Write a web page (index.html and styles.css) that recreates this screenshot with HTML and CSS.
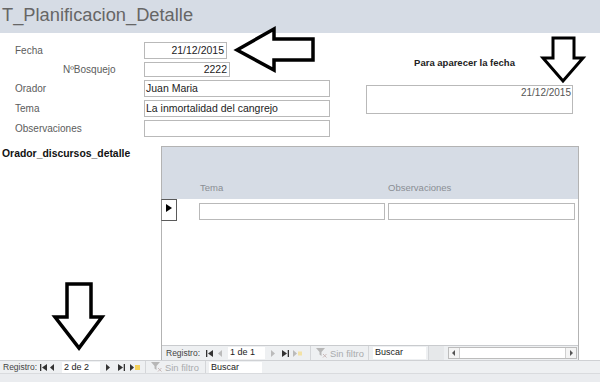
FILE: index.html
```html
<!DOCTYPE html>
<html lang="es">
<head>
    <meta charset="UTF-8">
    <title>T_Planificacion_Detalle</title>
    <link rel="stylesheet" href="styles.css">
</head>
<body>
    <div class="form">
        <!-- Form header -->
        <header class="title-bar">
            <h1 class="title">T_Planificacion_Detalle</h1>
        </header>

        <!-- Detail section -->
        <main class="detail">
            <section class="top">
                <div class="fields">
                    <span class="lbl">Fecha</span>
                    <div class="box box-date num">21/12/2015</div>
                    <span class="lbl lbl-indent">NºBosquejo</span>
                    <div class="box box-num num">2222</div>
                    <span class="lbl">Orador</span>
                    <div class="box box-wide">Juan Maria</div>
                    <span class="lbl">Tema</span>
                    <div class="box box-wide">La inmortalidad del cangrejo</div>
                    <span class="lbl">Observaciones</span>
                    <div class="box box-wide"></div>
                </div>

                <div class="date-panel">
                    <div class="panel-title">Para aparecer la fecha</div>
                    <div class="panel-box">21/12/2015</div>
                </div>
            </section>

            <section class="sub">
                <div class="sub-name">Orador_discursos_detalle</div>

                <div class="subform">
                    <div class="sub-head">
                        <span class="col col-tema">Tema</span>
                        <span class="col col-obs">Observaciones</span>
                    </div>
                    <div class="sub-row">
                        <div class="selector">
                            <svg width="6" height="8" viewBox="0 0 6 8"><polygon points="0 0 6 4 0 8" fill="#000"/></svg>
                        </div>
                        <div class="cell cell-tema"></div>
                        <div class="cell cell-obs"></div>
                    </div>
                    <div class="sub-fill"></div>

                    <!-- Subform navigation -->
                    <div class="navbar sub-nav">
                        <span class="nav-label">Registro:</span>
                        <span class="nav-btn sn-first"><svg width="7" height="7" viewBox="0 0 7 7"><rect x="0" y="0" width="1.3" height="7" fill="#333"/><polygon points="7 0 2 3.5 7 7" fill="#333"/></svg></span>
                        <span class="nav-btn sn-prev"><svg width="4" height="7" viewBox="0 0 4 7"><polygon points="4 0 0 3.5 4 7" fill="#bbb"/></svg></span>
                        <span class="nav-input sn-input">1 de 1</span>
                        <span class="nav-btn sn-next"><svg width="4" height="7" viewBox="0 0 4 7"><polygon points="0 0 4 3.5 0 7" fill="#bbb"/></svg></span>
                        <span class="nav-btn sn-last"><svg width="7" height="7" viewBox="0 0 7 7"><polygon points="0 0 5 3.5 0 7" fill="#333"/><rect x="5.7" y="0" width="1.3" height="7" fill="#333"/></svg></span>
                        <span class="nav-btn sn-new"><svg width="9" height="7" viewBox="0 0 9 7"><polygon points="0 0 4 3.5 0 7" fill="#bbb"/><rect x="5" y="1.5" width="4" height="4" fill="#f3e2a6"/></svg></span>
                        <span class="sep"></span>
                        <span class="filter">
                            <svg width="11" height="10" viewBox="0 0 11 10"><polygon points="0 0 9 0 5.5 4 5.5 8 3.5 6.5 3.5 4" fill="#b7b7b7"/><path d="M7 6 L10.5 9.5 M10.5 6 L7 9.5" stroke="#c9b9b9" stroke-width="1"/></svg>
                            Sin filtro
                        </span>
                        <span class="sep"></span>
                        <span class="nav-input search sn-search">Buscar</span>
                        <span class="nav-gap"></span>
                        <div class="scrollbar">
                            <span class="sb-btn"><svg width="3" height="6" viewBox="0 0 3 6"><polygon points="3 0 0 3 3 6" fill="#555"/></svg></span>
                            <span class="sb-track"></span>
                            <span class="sb-btn"><svg width="3" height="6" viewBox="0 0 3 6"><polygon points="0 0 3 3 0 6" fill="#555"/></svg></span>
                        </div>
                    </div>
                </div>
            </section>
        </main>

        <!-- Main form navigation -->
        <footer class="navbar main-nav">
            <span class="nav-label">Registro:</span>
            <span class="nav-btn mn-first"><svg width="7" height="7" viewBox="0 0 7 7"><rect x="0" y="0" width="1.3" height="7" fill="#333"/><polygon points="7 0 2 3.5 7 7" fill="#333"/></svg></span>
            <span class="nav-btn mn-prev"><svg width="4" height="7" viewBox="0 0 4 7"><polygon points="4 0 0 3.5 4 7" fill="#333"/></svg></span>
            <span class="nav-input mn-input">2 de 2</span>
            <span class="nav-btn mn-next"><svg width="4" height="7" viewBox="0 0 4 7"><polygon points="0 0 4 3.5 0 7" fill="#333"/></svg></span>
            <span class="nav-btn mn-last"><svg width="7" height="7" viewBox="0 0 7 7"><polygon points="0 0 5 3.5 0 7" fill="#333"/><rect x="5.7" y="0" width="1.3" height="7" fill="#333"/></svg></span>
            <span class="nav-btn mn-new"><svg width="10" height="7" viewBox="0 0 10 7"><polygon points="0 0 4 3.5 0 7" fill="#333"/><rect x="5" y="1" width="5" height="5" fill="#f2d05a"/></svg></span>
            <span class="sep"></span>
            <span class="filter">
                <svg width="11" height="10" viewBox="0 0 11 10"><polygon points="0 0 9 0 5.5 4 5.5 8 3.5 6.5 3.5 4" fill="#b7b7b7"/><path d="M7 6 L10.5 9.5 M10.5 6 L7 9.5" stroke="#c9b9b9" stroke-width="1"/></svg>
                Sin filtro
            </span>
            <span class="sep"></span>
            <span class="nav-input search mn-search">Buscar</span>
        </footer>
        <div class="status"></div>

        <!-- Hand-drawn annotation arrows -->
        <svg class="arrows" width="600" height="382" viewBox="0 0 600 382">
            <polygon points="237 50 274 29 274 39 313 39 313 60 274 60 274 70" fill="#fff" stroke="#000" stroke-width="3.5" stroke-linejoin="miter"/>
            <polygon points="553 38 574 38 574 58 583 58 563 81 543 58 553 58" fill="#fff" stroke="#000" stroke-width="3"/>
            <polygon points="67 284 91 284 91 317 102 317 79 348 55 317 67 317" fill="#fff" stroke="#000" stroke-width="3.5"/>
        </svg>
    </div>
</body>
</html>
```

FILE: styles.css
```css
body {
    margin: 0;
    background: #fff;
    font-family: 'Liberation Sans', Arial, sans-serif;
}

.form {
    position: relative;
    width: 600px;
    height: 382px;
    overflow: hidden;
    display: flex;
    flex-direction: column;
}

/* Header */
.title-bar {
    height: 33px;
    background: #d6dce5;
    display: flex;
    align-items: center;
    padding-left: 2px;
}

.title {
    margin: 0;
    font-size: 18.3px;
    font-weight: normal;
    color: #666;
    line-height: 1;
    padding-bottom: 2px;
}

/* Detail */
.detail {
    height: 327px;
    display: flex;
    flex-direction: column;
}

.top {
    display: flex;
    padding-top: 9px;
}

.fields {
    display: grid;
    grid-template-columns: 129px auto;
    grid-template-rows: 17px 15px 17px 17px 17px;
    row-gap: 3px;
    padding-left: 15px;
    align-items: center;
}

.lbl {
    font-size: 10px;
    color: #5c5c5c;
    line-height: 12px;
}

.lbl-indent {
    padding-left: 48px;
}

.box {
    box-sizing: border-box;
    height: 100%;
    border: 1px solid #b9b9b9;
    font-size: 10.5px;
    color: #222;
    line-height: 14px;
    padding: 0 1px;
    white-space: nowrap;
}

.num {
    text-align: right;
    line-height: 15px;
    padding-right: 2px;
}

.box-num {
    line-height: 13px;
}

.box-date { width: 83px; }
.box-num { width: 86px; }
.box-wide { width: 186px; }

.date-panel {
    margin-left: 36px;
    padding-top: 15px;
    display: flex;
    flex-direction: column;
}

.panel-title {
    font-size: 9.5px;
    font-weight: bold;
    color: #222;
    line-height: 12px;
    text-align: center;
    padding-right: 12px;
    padding-left: 2px;
}

.panel-box {
    box-sizing: border-box;
    width: 207px;
    height: 29px;
    margin-top: 16px;
    border: 1px solid #b9b9b9;
    font-size: 10px;
    color: #555;
    text-align: right;
    line-height: 12px;
    padding: 1px 1px 0 0;
}

/* Subform */
.sub {
    display: flex;
    margin-top: 9px;
    flex: 1;
}

.sub-name {
    width: 161px;
    padding: 2px 0 0 2px;
    box-sizing: border-box;
    font-size: 10.4px;
    font-weight: bold;
    color: #111;
    line-height: 12px;
}

.subform {
    box-sizing: border-box;
    width: 418px;
    border: 1px solid #b3b3b3;
    border-bottom: none;
    display: flex;
    flex-direction: column;
}

.sub-head {
    height: 52px;
    background: #d6dce5;
    display: flex;
    align-items: flex-end;
    padding-bottom: 5px;
    box-sizing: border-box;
}

.col {
    font-size: 9.5px;
    color: #8a8e94;
    line-height: 12px;
}

.col-tema {
    margin-left: 38px;
    width: 188px;
}

.sub-row {
    height: 22px;
    display: flex;
    align-items: center;
}

.selector {
    box-sizing: border-box;
    align-self: stretch;
    width: 16px;
    margin-left: -1px;
    border: 1px solid #5a5a5a;
    border-left-color: #888;
    background: #fff;
    display: flex;
    padding: 4px 0 0 4px;
}

.cell {
    box-sizing: border-box;
    height: 17px;
    border: 1px solid #b9b9b9;
    margin-top: 3px;
}

.cell-tema {
    width: 186px;
    margin-left: 22px;
}

.cell-obs {
    width: 187px;
    margin-left: 3px;
}

.sub-fill {
    flex: 1;
}

/* Navigation bars */
.navbar {
    display: flex;
    align-items: center;
    font-size: 8.5px;
    color: #444;
    background: #eef0f2;
    box-sizing: border-box;
}

.sub-nav {
    height: 15px;
    border-top: 1px solid #c9cbce;
    padding-left: 4px;
}

.main-nav {
    height: 13px;
    border-top: 1px solid #cfd1d4;
    padding-left: 3px;
}

.nav-label {
    width: 35px;
    flex-shrink: 0;
}

.nav-btn {
    display: flex;
    align-items: center;
    justify-content: center;
    height: 100%;
    flex-shrink: 0;
}

.nav-input {
    box-sizing: border-box;
    height: 11px;
    background: #fff;
    color: #222;
    font-size: 9px;
    line-height: 11px;
    padding-left: 2px;
    flex-shrink: 0;
}

.sep {
    width: 1px;
    height: 100%;
    background: #d4d6d9;
    flex-shrink: 0;
}

.filter {
    display: flex;
    align-items: center;
    gap: 3px;
    font-size: 9.4px;
    color: #a9abad;
    padding: 0 4px 0 5px;
    white-space: nowrap;
    flex-shrink: 0;
}

.search {
    color: #222;
}

/* main nav element widths */
.mn-first { width: 10px; }
.mn-prev { width: 8px; }
.mn-input { width: 38px; margin-left: 6px; }
.mn-next { width: 10px; margin-left: 3px; }
.mn-last { width: 14px; margin-left: 1px; }
.mn-new { width: 14px; }
.main-nav .sep { margin-left: 3px; }
.main-nav .filter { padding-right: 3px; }
.mn-search { width: 53px; margin-left: 3px; }

/* subform nav element widths */
.sn-first { width: 12px; margin-left: 2px; }
.sn-prev { width: 10px; }
.sn-input { width: 37px; margin-left: 3px; height: 12px; }
.sn-next { width: 12px; margin-left: 2px; }
.sn-last { width: 12px; }
.sn-new { width: 12px; }
.sub-nav .sep { margin-left: 7px; }
.sub-nav .filter + .sep { margin-left: 0; }
.sn-search { width: 53px; margin-left: 4px; height: 12px; }

.nav-gap {
    width: 15px;
    height: 100%;
    background: #e6e8ea;
    margin: 0 4px 0 2px;
    border-left: 1px solid #d4d6d9;
    flex-shrink: 0;
}

.scrollbar {
    flex: 1;
    height: 12px;
    display: flex;
    border: 1px solid #bcbcbc;
    background: #fff;
    margin-right: 1px;
    box-sizing: border-box;
}

.sb-btn {
    width: 10px;
    display: flex;
    align-items: center;
    justify-content: center;
    background: #f4f4f4;
}

.sb-track {
    flex: 1;
    border-left: 1px solid #cfcfcf;
    border-right: 1px solid #cfcfcf;
}

.status {
    flex: 1;
    background: #eaecef;
    border-top: 1px solid #d9dbde;
}

.arrows {
    position: absolute;
    top: 0;
    left: 0;
    pointer-events: none;
}
```
